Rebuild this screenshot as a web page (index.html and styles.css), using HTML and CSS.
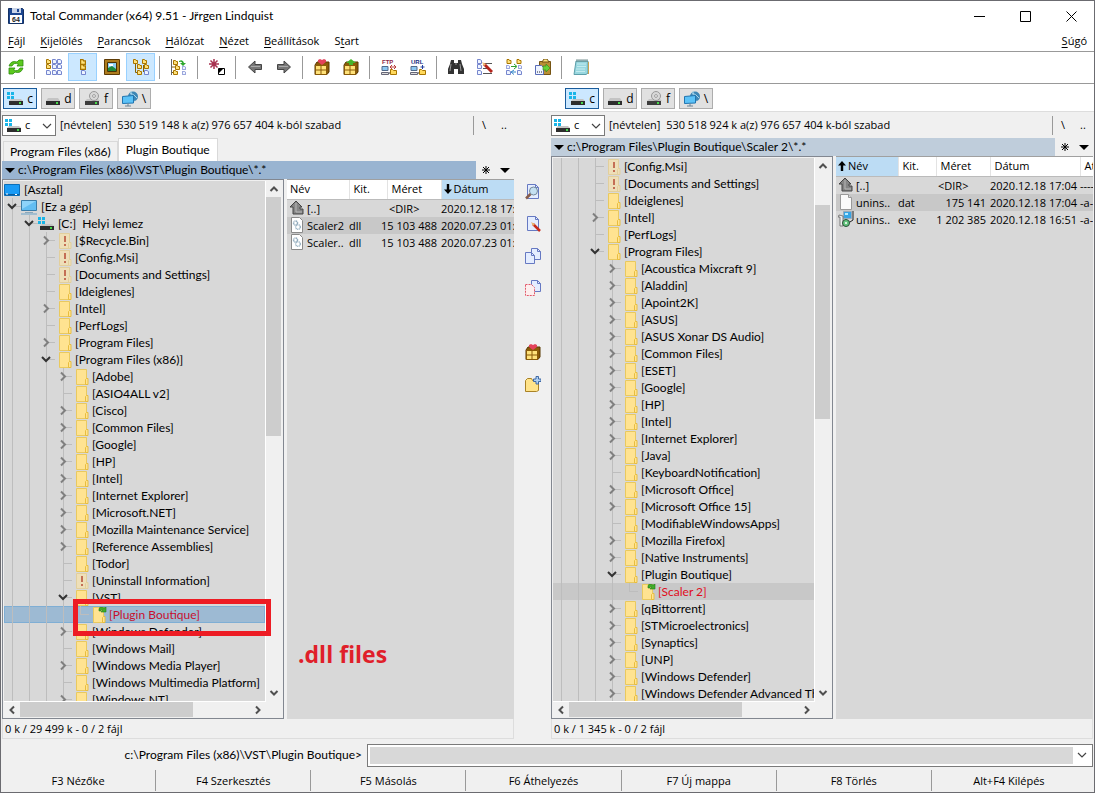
FILE: index.html
```html
<!DOCTYPE html>
<html lang="hu">
<head>
<meta charset="utf-8">
<title>Total Commander (x64) 9.51 - Jřrgen Lindquist</title>
<link rel="stylesheet" href="styles.css">
<script src="tree.js" defer></script>
</head>
<body>
<svg class="defs" aria-hidden="true">
  <symbol id="folder" viewBox="0 0 16 16"><path d="M2.5.5h10v15h-10z" fill="#ffe391" stroke="#e9c95f"/><path d="M12.500 9.500h1.500v6h-2.500v-5z" fill="#ffe391" stroke="#e8bd3f"/></symbol>
  <symbol id="hidden" viewBox="0 0 16 16"><path d="M2.500.5h10v15h-10z" fill="#eedfb8" stroke="#e2cf9c"/><path d="M12.500 9.500h1.500v6h-2.500v-5z" fill="#eedfb8" stroke="#e2cf9c"/><path d="M7 3h2v6H7zM7 11h2v2H7z" fill="#c46f55"/></symbol>
  <symbol id="current" viewBox="0 0 16 16"><path d="M2.500.5h10v15h-10z" fill="#ffe391" stroke="#e9c95f"/><path d="M12.500 9.500h1.500v6h-2.500v-5z" fill="#ffe391" stroke="#e8bd3f"/><path d="M8 4V2q0-2 3-2l2 1 2-1v5h-5l2-2q-2-1-2 1z" fill="#3fae2a" stroke="#237a18" stroke-width=".6"/></symbol>
  <symbol id="desktop" viewBox="0 0 16 16"><path d="M.5 2.500h15v11H.5z" fill="#1a9bf5" stroke="#0c6fb8"/><path d="M1 12h14v1H1z" fill="#0b5d9e"/><path d="M2 12h2M11 12.500h2" stroke="#fff"/></symbol>
  <symbol id="pc" viewBox="0 0 16 16"><path d="M.5 1.500h15v10H.5z" fill="#62bdf2" stroke="#3a7ca8"/><path d="M1 2h14L1 10z" fill="#8dd3fa"/><path d="M4 13.500h8" stroke="#8aa7ba"/><path d="M0 15h16" stroke="#6da3c7"/></symbol>
  <symbol id="hdd" viewBox="0 0 16 16"><path d="M4 7h10l2 3H2z" fill="#c4c4c4"/><path d="M2 10h14v4H2z" fill="#2d2d2d"/><path d="M12 11h2v2h-2z" fill="#46d84a"/></symbol>
  <symbol id="sysdrive" viewBox="0 0 16 16"><path d="M0 1h3v3H0zM4 1h3v3H4zM0 5h3v3H0zM4 5h3v3H4z" fill="#19b5e8"/><path d="M4 8h10l2 2H2z" fill="#c4c4c4"/><path d="M2 10h14v4H2z" fill="#2d2d2d"/><path d="M12 11h2v2h-2z" fill="#46d84a"/></symbol>
  <symbol id="cd" viewBox="0 0 16 16"><path d="M3 8h11l2 2H1z" fill="#c4c4c4"/><circle cx="10" cy="5" r="4.500" fill="#d8d8d8" stroke="#999"/><circle cx="10" cy="5" r="1.400" fill="#fff" stroke="#999"/><path d="M1 10h14v4H1z" fill="#3d3d3d"/><path d="M11 11h2v2h-2z" fill="#46d84a"/></symbol>
  <symbol id="net" viewBox="0 0 16 16"><circle cx="11" cy="5.500" r="5" fill="#3d86b5"/><path d="M8 2q4 1 7 5M9 0q-1 5 3 10" stroke="#a9d5ea" fill="none"/><path d="M.5 5.500l11-1v7.500l-11 .5z" fill="#5cc2f7" stroke="#2075b0"/><path d="M3 15h6M6 12v3" stroke="#6b8496"/></symbol>
  <symbol id="up" viewBox="0 0 16 16"><path d="M7 1l6 6h-2v2h3v5H4V7H1z" fill="#858585" stroke="#444"/><path d="M7 3v9h6" stroke="#b8b8b8" fill="none"/></symbol>
  <symbol id="dll" viewBox="0 0 16 16"><path d="M2.500.5h8l3 3v12h-11z" fill="#fff" stroke="#8a8a8a"/><circle cx="6.500" cy="6" r="2" fill="none" stroke="#8fa9bb" stroke-width="1.500" stroke-dasharray="1 .5"/><circle cx="9" cy="10" r="2.300" fill="none" stroke="#9bb4c4" stroke-width="1.500" stroke-dasharray="1 .5"/></symbol>
  <symbol id="file" viewBox="0 0 16 16"><path d="M2.500.5h8l3 3v12h-11z" fill="#fafafa" stroke="#999"/><path d="M10.500.5v3h3" fill="#ddd" stroke="#999"/></symbol>
  <symbol id="setup" viewBox="0 0 16 16"><path d="M5.500.5h8v7h-8z" fill="#37a5e5" stroke="#9ab"/><path d="M7 2h3v2H7z" fill="#b9edff"/><path d="M1 4l4 1v10H2V6H0z" fill="#eee" stroke="#555" stroke-width=".7"/><path d="M15 0v9l-3 2H8" stroke="#222" fill="none"/><circle cx="8" cy="12" r="3.500" fill="#62c47d" stroke="#2d4d39"/><circle cx="8" cy="12" r="1" fill="#fff"/></symbol>
  <symbol id="down" viewBox="0 0 17 17"><path d="M4 6l4 4 4-4" fill="none" stroke="#333" stroke-width="2"/></symbol>
  <symbol id="right" viewBox="0 0 17 17"><path d="M6 4.500l4 4-4 4" fill="none" stroke="#808080" stroke-width="2"/></symbol>
  <symbol id="thin" viewBox="0 0 10 10"><path d="M1 3l4 4 4-4" fill="none" stroke="#444" stroke-width="1.200"/></symbol>
  <symbol id="sup" viewBox="0 0 10 10"><path d="M1.500 7L5 3.500 8.500 7" fill="none" stroke="#505050" stroke-width="2"/></symbol>
  <symbol id="sdown" viewBox="0 0 10 10"><path d="M1.500 3L5 6.500 8.500 3" fill="none" stroke="#505050" stroke-width="2"/></symbol>
  <symbol id="sleft" viewBox="0 0 10 10"><path d="M7 1.500L3.500 5 7 8.500" fill="none" stroke="#505050" stroke-width="2"/></symbol>
  <symbol id="sright" viewBox="0 0 10 10"><path d="M3 1.500L6.500 5 3 8.500" fill="none" stroke="#505050" stroke-width="2"/></symbol>
  <symbol id="tri" viewBox="0 0 10 10"><path d="M0 3h10L5 8z" fill="#000"/></symbol>
  <symbol id="star" viewBox="0 0 10 10"><path d="M5 1v8M1 5h8M2 2l6 6M8 2L2 8" stroke="#000"/></symbol>
  <symbol id="arrup" viewBox="0 0 8 10"><path d="M4 0l4 4.500H5.200V10H2.800V4.500H0z"/></symbol>
  <symbol id="arrdown" viewBox="0 0 8 10"><path d="M4 10l4-4.500H5.200V0H2.800v5.500H0z"/></symbol>
  <symbol id="app" viewBox="0 0 16 16"><path d="M.5.5h14l1 1v14H.5z" fill="#1c4690" stroke="#143164"/><path d="M4 0h9v5H4z" fill="#c9d4e8"/><path d="M9 1h2v3H9z" fill="#1c4690"/><path d="M2 7h12v8H2z" fill="#fff"/><text x="4" y="14" font-size="7" font-weight="bold" font-family="Liberation Sans" fill="#222">64</text></symbol>
  <symbol id="refresh" viewBox="0 0 16 16"><path d="M1 7q2-6 8-4l2-2h4v6H9l1.500-2Q6 3 4 7z" fill="#5cc91f" stroke="#2c8c0c" stroke-width=".8"/><path d="M15 9q-2 6-8 4l-2 2H1V9h6l-1.500 2q4.500 2 6.500-2z" fill="#5cc91f" stroke="#2c8c0c" stroke-width=".8"/></symbol>
  <symbol id="minifolder" viewBox="0 0 5 5"><path d="M.5.5h2l.5 1h1.500v3h-4z" fill="#ffe27a" stroke="#a87500"/></symbol>
  <symbol id="minifile" viewBox="0 0 5 5"><path d="M.5.500h2.500l1.500 1v3h-4z" fill="#eef4ff" stroke="#6878c8" stroke-width=".9"/></symbol>
  <symbol id="brief" viewBox="0 0 16 16"><use href="#minifolder" x="0" y="0" width="5" height="5"/><use href="#minifolder" x="0" y="5" width="5" height="5"/><use href="#minifile" x="0" y="11" width="5" height="5"/><use href="#minifile" x="6" y="0" width="5" height="5"/><use href="#minifile" x="6" y="5" width="5" height="5"/><use href="#minifile" x="6" y="11" width="5" height="5"/><use href="#minifile" x="11" y="0" width="5" height="5"/><use href="#minifile" x="11" y="5" width="5" height="5"/><use href="#minifile" x="11" y="11" width="5" height="5"/></symbol>
  <symbol id="full" viewBox="0 0 16 16"><use href="#minifolder" x="5" y="0" width="6" height="6"/><use href="#minifolder" x="5" y="5" width="6" height="6"/><use href="#minifile" x="6" y="11" width="5" height="5"/></symbol>
  <symbol id="thumbs" viewBox="0 0 16 16"><path d="M.5.5h15v15H.5z" fill="#ad7c1d" stroke="#5d3b06"/><path d="M3.500 3.500h9v9h-9z" fill="#8ed0f4" stroke="#4a3205"/><path d="M4 9l4-2 4 3v2H4z" fill="#1d8a3c"/><path d="M5 5h4v2H5z" fill="#fff"/></symbol>
  <symbol id="tree" viewBox="0 0 16 16"><path d="M2.500 5v8.500H6M10.500 6v7" stroke="#876400" fill="none"/><use href="#minifolder" x="0" y="0" width="5" height="5"/><use href="#minifolder" x="4" y="5" width="5" height="5"/><use href="#minifolder" x="4" y="11" width="5" height="5"/><use href="#minifolder" x="9" y="0" width="5" height="5"/><use href="#minifolder" x="11" y="5" width="5" height="5"/><use href="#minifile" x="11" y="11" width="5" height="5"/></symbol>
  <symbol id="branch" viewBox="0 0 16 16"><path d="M.5 0v16" stroke="#666"/><path d="M1 13.500h3M1 8h4" stroke="#876400"/><use href="#minifolder" x="2" y="1" width="5" height="5"/><use href="#minifolder" x="4" y="6" width="5" height="5"/><use href="#minifolder" x="2" y="11" width="5" height="5"/><path d="M8 2q4-2 5 2h2l-3 3-3-3h2q0-2-3-1z" fill="#2fa82f"/><use href="#minifile" x="11" y="7" width="4" height="4"/><use href="#minifile" x="11" y="12" width="4" height="4"/></symbol>
  <symbol id="select" viewBox="0 0 16 16"><path d="M5 0v10M0 5h10M1.500 1.500l7 7M8.500 1.500l-7 7" stroke="#a83250" stroke-width="1.500"/><path d="M9.500 9.500h6v6h-6z" fill="#fff" stroke="#000"/><path d="M10 10h4l-4 4z"/></symbol>
  <symbol id="back" viewBox="0 0 16 16"><path d="M1.500 8l6.500-6v3.500h6.500v5H8V14z" fill="#777" stroke="#444"/><path d="M4 7.500h9" stroke="#aaa"/></symbol>
  <symbol id="forward" viewBox="0 0 16 16"><path d="M14.500 8L8 2v3.500H1.500v5H8V14z" fill="#777" stroke="#444"/><path d="M3 7.500h9" stroke="#aaa"/></symbol>
  <symbol id="crate" viewBox="0 0 16 16"><path d="M1 6l2-3h12v10l-2 2.500H1z" fill="#8a5b08" stroke="#593800"/><path d="M1.500 6.500h11v9h-11z" fill="#ffe27a" stroke="#8a5b08"/><path d="M7 6v9M1 11h12" stroke="#8a5b08"/></symbol>
  <symbol id="pack" viewBox="0 0 16 16"><use href="#crate"/><path d="M4 1l2-1 2 1 2-1 2 1v2L8 6 4 3z" fill="#e4425b"/></symbol>
  <symbol id="unpack" viewBox="0 0 16 16"><use href="#crate"/><path d="M8 0l5 4h-3v2H6V4H3z" fill="#45b52c"/></symbol>
  <symbol id="machines" viewBox="0 0 16 16"><path d="M1 7.500h6v4H1z" fill="#8cc7f0" stroke="#50698a"/><path d="M.5 13.500h7v2h-7z" fill="#ddd" stroke="#667"/><path d="M8 14h3" stroke="#333"/><path d="M9.500 10.500h2l1 1h3v4h-6z" fill="#ffd95c" stroke="#a87500"/></symbol>
  <symbol id="ftp" viewBox="0 0 16 16"><text x="1" y="5" font-size="6" font-weight="bold" font-family="Liberation Sans" fill="#8c2746">FTP</text><use href="#machines"/><path d="M9 8h6M11 6L9 8l2 2M13 6l2 2-2 2" stroke="#b83c3c" fill="none"/></symbol>
  <symbol id="url" viewBox="0 0 16 16"><text x="1" y="5" font-size="6" font-weight="bold" font-family="Liberation Sans" fill="#202c80">URL</text><use href="#machines"/><path d="M12.500 6v4M10.500 8h4" stroke="#233f9e" fill="none"/></symbol>
  <symbol id="find" viewBox="0 0 16 16"><path d="M3 1h3v3h4V1h3l1 4 2 5v5h-6v-5H6v5H0v-5l2-5z" fill="#333"/><path d="M3 5L2 12M12 5l1 7M7 5h2" stroke="#999"/></symbol>
  <symbol id="rename" viewBox="0 0 16 16"><use href="#minifile" x="0" y="0" width="5" height="5"/><use href="#minifile" x="0" y="5" width="5" height="5"/><use href="#minifile" x="0" y="11" width="5" height="5"/><path d="M6 4.500h9M6 9.500h6M6 14.500h9" stroke="#555"/><path d="M7 5l8 8" stroke="#b5241c" stroke-width="3"/><path d="M5 3l4 2-2 2z" fill="#f2c27a"/></symbol>
  <symbol id="sync" viewBox="0 0 16 16"><use href="#minifolder" x="0" y="0" width="6" height="5"/><use href="#minifolder" x="10" y="0" width="6" height="5"/><use href="#minifile" x="0" y="6" width="4" height="4"/><use href="#minifile" x="0" y="11" width="5" height="5"/><use href="#minifile" x="12" y="6" width="4" height="4"/><use href="#minifile" x="11" y="11" width="5" height="5"/><path d="M5 7.500h5M8 5l3 2.500L8 10" stroke="#2da02d" fill="none"/><path d="M10 13H6M8 11l-3 2 3 2.500" stroke="#3285c8" fill="none"/></symbol>
  <symbol id="paste" viewBox="0 0 16 16"><path d="M4.500 2.500h11v13h-11z" fill="#b98f35" stroke="#755312"/><path d="M7 3l2-3h3l2 3z" fill="#ffe57d" stroke="#755312"/><path d="M.5 6.500h6l2 2v7h-8z" fill="#eef4ff" stroke="#5a6db8"/><path d="M2 13h1M4 13h1M6 13h1" stroke="#223"/><path d="M8 7h3V5l4 4-4 4v-2H8z" fill="#66d338" stroke="#35851a" stroke-width=".6"/></symbol>
  <symbol id="notes" viewBox="0 0 16 16"><path d="M3 2h12v12l-2 1.500H1z" fill="#98d7df" stroke="#5e9faa"/><path d="M4 5h9M4 7.500h9M3 10h9M3 12.500h9" stroke="#d5f3f6" stroke-width=".7"/><path d="M4 0v3M6 0v3M8 0v3M10 0v3M12 0v3M14 0v3" stroke="#577" stroke-width=".8"/><path d="M15.500 3v12" stroke="#c9a14f"/></symbol>
  <symbol id="page" viewBox="0 0 16 16"><path d="M2.500.5h8l3 3v11h-11z" fill="#e4edff" stroke="#6679c2"/><path d="M10.500.5v3h3" fill="none" stroke="#6679c2"/></symbol>
  <symbol id="view" viewBox="0 0 16 16"><use href="#page"/><circle cx="8.500" cy="7" r="4" fill="#c4e0f2" stroke="#74899b"/><path d="M5.500 10L1 14.500" stroke="#875c4b" stroke-width="2.500"/></symbol>
  <symbol id="edit" viewBox="0 0 16 16"><use href="#page"/><path d="M8 8l7 7" stroke="#c62a1c" stroke-width="2.500"/><path d="M6 6l4 2-2 2z" fill="#e9b66f"/></symbol>
  <symbol id="copy" viewBox="0 0 16 16"><path d="M6.500.5h6l3 3v8h-9z" fill="#e4edff" stroke="#6679c2"/><path d="M12.500.5v3h3" stroke="#6679c2" fill="none"/><path d="M.5 4.500h6l3 3v8h-9z" fill="#e4edff" stroke="#6679c2"/><path d="M6.500 4.500v3h3" stroke="#6679c2" fill="none"/></symbol>
  <symbol id="move" viewBox="0 0 16 16"><path d="M6.500.5h6l3 3v8h-9z" fill="#e4edff" stroke="#6679c2"/><path d="M12.500.5v3h3" stroke="#6679c2" fill="none"/><path d="M.5 4.500h6l3 3v8h-9z" fill="#fdeeee" stroke="#e2596a" stroke-dasharray="2 1"/></symbol>
  <symbol id="mkdir" viewBox="0 0 16 16"><path d="M.5 4.500l2-2h4l1 2h5l1 1v9l-2 1H.5z" fill="#ffe389" stroke="#a98226"/><path d="M11 .5h2.500V3H16v2.500h-2.500V8H11V5.500H8.500V3H11z" fill="#afd0f2" stroke="#315d9e" stroke-width=".9"/></symbol>
</svg>

<header class="titlebar">
  <svg class="ic"><use href="#app"/></svg>
  <h1>Total Commander (x64) 9.51 - Jřrgen Lindquist</h1>
  <div class="winbtns">
    <button aria-label="Kis méret"><svg class="win" viewBox="0 0 11 11"><path d="M0 5.500h11" stroke="#000"/></svg></button>
    <button aria-label="Teljes méret"><svg class="win" viewBox="0 0 11 11"><path d="M.5.5h10v10H.5z" fill="none" stroke="#000"/></svg></button>
    <button aria-label="Bezárás"><svg class="win" viewBox="0 0 11 11"><path d="M.5.5l10 10M10.500.5l-10 10" stroke="#000"/></svg></button>
  </div>
</header>

<nav class="menu">
  <button><u>F</u>ájl</button><button><u>K</u>ijelölés</button><button><u>P</u>arancsok</button><button><u>H</u>álózat</button><button><u>N</u>ézet</button><button><u>B</u>eállítások</button><button>S<u>t</u>art</button><button class="help"><u>S</u>úgó</button>
</nav>

<div class="toolbar" role="toolbar">
  <button aria-label="Frissítés"><svg class="ic"><use href="#refresh"/></svg></button><i class="sep"></i>
  <button aria-label="Rövid"><svg class="ic"><use href="#brief"/></svg></button>
  <button class="on" aria-label="Teljes"><svg class="ic"><use href="#full"/></svg></button>
  <button aria-label="Képek"><svg class="ic"><use href="#thumbs"/></svg></button>
  <button class="on" aria-label="Fa"><svg class="ic"><use href="#tree"/></svg></button><i class="sep"></i>
  <button aria-label="Ágnézet"><svg class="ic"><use href="#branch"/></svg></button><i class="sep"></i>
  <button aria-label="Kijelölés megfordítása"><svg class="ic"><use href="#select"/></svg></button><i class="sep"></i>
  <button aria-label="Vissza"><svg class="ic"><use href="#back"/></svg></button>
  <button aria-label="Előre"><svg class="ic"><use href="#forward"/></svg></button><i class="sep"></i>
  <button aria-label="Tömörítés"><svg class="ic"><use href="#pack"/></svg></button>
  <button aria-label="Kibontás"><svg class="ic"><use href="#unpack"/></svg></button><i class="sep"></i>
  <button aria-label="Kapcsolódás"><svg class="ic"><use href="#ftp"/></svg></button>
  <button aria-label="Új kapcsolat"><svg class="ic"><use href="#url"/></svg></button><i class="sep"></i>
  <button aria-label="Keresés"><svg class="ic"><use href="#find"/></svg></button>
  <button aria-label="Csoportos átnevezés"><svg class="ic"><use href="#rename"/></svg></button>
  <button aria-label="Szinkronizálás"><svg class="ic"><use href="#sync"/></svg></button>
  <button aria-label="Beillesztés"><svg class="ic"><use href="#paste"/></svg></button><i class="sep"></i>
  <button aria-label="Jegyzettömb"><svg class="ic"><use href="#notes"/></svg></button>
</div>

<div class="drivebar">
  <div class="drives">
    <button class="on"><svg class="ic"><use href="#sysdrive"/></svg>c</button><button><svg class="ic"><use href="#hdd"/></svg>d</button><button><svg class="ic"><use href="#cd"/></svg>f</button><button><svg class="ic"><use href="#net"/></svg>\</button>
  </div>
  <div class="drives">
    <button class="on"><svg class="ic"><use href="#sysdrive"/></svg>c</button><button><svg class="ic"><use href="#hdd"/></svg>d</button><button><svg class="ic"><use href="#cd"/></svg>f</button><button><svg class="ic"><use href="#net"/></svg>\</button>
  </div>
</div>

<main class="panes">
  <section class="pane">
    <div class="driverow">
      <div class="drivesel"><select aria-label="Meghajtó"><option>c</option></select><svg class="ic"><use href="#sysdrive"/></svg><svg class="chev"><use href="#thin"/></svg></div>
      <span class="space">[névtelen]&nbsp; 530 519 148 k a(z) 976 657 404 k-ból szabad</span>
      <div class="jump"><button>\</button><button>..</button></div>
    </div>
    <div class="tabs"><button>Program Files (x86)</button><button class="on">Plugin Boutique</button></div>
    <div class="pathrow">
      <div class="path active"><svg class="mini"><use href="#tri"/></svg>c:\Program Files (x86)\VST\Plugin Boutique\*.*</div>
      <button aria-label="Kedvencek"><svg class="mini"><use href="#star"/></svg></button><button aria-label="Előzmények"><svg class="mini"><use href="#tri"/></svg></button>
    </div>
    <div class="body">
      <div class="treebox">
        <ul class="tree" id="tree-left"></ul>
        <div class="vbar"><button aria-label="Fel"><svg class="mini"><use href="#sup"/></svg></button><div class="track"><i class="thumb t-left"></i></div><button aria-label="Le"><svg class="mini"><use href="#sdown"/></svg></button></div>
        <div class="hbar"><button aria-label="Balra"><svg class="mini"><use href="#sleft"/></svg></button><div class="track"><i class="thumb t-across"></i></div><button aria-label="Jobbra"><svg class="mini"><use href="#sright"/></svg></button></div>
      </div>
      <div class="list">
        <table class="four">
          <colgroup><col class="c-name"><col class="c-ext"><col class="c-size"><col class="c-date"></colgroup>
          <thead><tr><th>Név</th><th>Kit.</th><th>Méret</th><th class="sorted"><svg class="arr"><use href="#arrdown"/></svg>Dátum</th></tr></thead>
          <tbody>
            <tr><td><span class="name"><svg class="ic"><use href="#up"/></svg>[..]</span></td><td></td><td class="dir">&lt;DIR&gt;</td><td>2020.12.18 17:04</td></tr>
            <tr class="cur"><td><span class="name"><svg class="ic"><use href="#dll"/></svg>Scaler2</span></td><td>dll</td><td><span class="num">15 103 488</span></td><td>2020.07.23 01:12</td></tr>
            <tr><td><span class="name"><svg class="ic"><use href="#dll"/></svg>Scaler..</span></td><td>dll</td><td><span class="num">15 103 488</span></td><td>2020.07.23 01:12</td></tr>
          </tbody>
        </table>
      </div>
      <div class="mark"></div>
      <div class="note">.dll files</div>
    </div>
    <div class="status">0 k / 29 499 k - 0 / 2 fájl</div>
  </section>

  <div class="middle">
    <button aria-label="Nézőke"><svg class="ic"><use href="#view"/></svg></button>
    <button aria-label="Szerkesztés"><svg class="ic"><use href="#edit"/></svg></button>
    <button aria-label="Másolás"><svg class="ic"><use href="#copy"/></svg></button>
    <button aria-label="Áthelyezés"><svg class="ic"><use href="#move"/></svg></button>
    <button class="apart" aria-label="Tömörítés"><svg class="ic"><use href="#pack"/></svg></button>
    <button aria-label="Új mappa"><svg class="ic"><use href="#mkdir"/></svg></button>
  </div>

  <section class="pane">
    <div class="driverow">
      <div class="drivesel"><select aria-label="Meghajtó"><option>c</option></select><svg class="ic"><use href="#sysdrive"/></svg><svg class="chev"><use href="#thin"/></svg></div>
      <span class="space">[névtelen]&nbsp; 530 518 924 k a(z) 976 657 404 k-ból szabad</span>
      <div class="jump"><button>\</button><button>..</button></div>
    </div>
    <div class="pathrow">
      <div class="path"><svg class="mini"><use href="#tri"/></svg>c:\Program Files\Plugin Boutique\Scaler 2\*.*</div>
      <button aria-label="Kedvencek"><svg class="mini"><use href="#star"/></svg></button><button aria-label="Előzmények"><svg class="mini"><use href="#tri"/></svg></button>
    </div>
    <div class="body">
      <div class="treebox">
        <ul class="tree" id="tree-right"></ul>
        <div class="vbar"><button aria-label="Fel"><svg class="mini"><use href="#sup"/></svg></button><div class="track"><i class="thumb t-right"></i></div><button aria-label="Le"><svg class="mini"><use href="#sdown"/></svg></button></div>
        <div class="hbar"><button aria-label="Balra"><svg class="mini"><use href="#sleft"/></svg></button><div class="track"><i class="thumb t-across"></i></div><button aria-label="Jobbra"><svg class="mini"><use href="#sright"/></svg></button></div>
      </div>
      <div class="list">
        <table>
          <colgroup><col class="c-name"><col class="c-ext"><col class="c-size"><col class="c-date"><col class="c-attr"></colgroup>
          <thead><tr><th class="sorted"><svg class="arr"><use href="#arrup"/></svg>Név</th><th>Kit.</th><th>Méret</th><th>Dátum</th><th>Attrib.</th></tr></thead>
          <tbody>
            <tr><td><span class="name"><svg class="ic"><use href="#up"/></svg>[..]</span></td><td></td><td class="dir">&lt;DIR&gt;</td><td>2020.12.18 17:04</td><td>----</td></tr>
            <tr class="cur"><td><span class="name"><svg class="ic"><use href="#file"/></svg>unins..</span></td><td>dat</td><td><span class="num">175 141</span></td><td>2020.12.18 17:04</td><td>-a--</td></tr>
            <tr><td><span class="name"><svg class="ic"><use href="#setup"/></svg>unins..</span></td><td>exe</td><td><span class="num">1 202 385</span></td><td>2020.12.18 16:51</td><td>-a--</td></tr>
          </tbody>
        </table>
      </div>
    </div>
    <div class="status">0 k / 1 345 k - 0 / 2 fájl</div>
  </section>
</main>

<div class="cmdline">
  <label for="cmd">c:\Program Files (x86)\VST\Plugin Boutique&gt;</label>
  <div class="cmdbox"><input id="cmd" type="text"><button aria-label="Előzmények"><svg class="mini"><use href="#thin"/></svg></button></div>
</div>
<footer class="fkeys">
  <button>F3 Nézőke</button><button>F4 Szerkesztés</button><button>F5 Másolás</button><button>F6 Áthelyezés</button><button>F7 Új mappa</button><button>F8 Törlés</button><button>Alt+F4 Kilépés</button>
</footer>
</body>
</html>
```
FILE: tree.js
```javascript
// Each entry: depth, toggle ("+" closed, "-" open, "." none), label, icon (default folder)
const LEFT = [
  [0, ".", "[Asztal]", "desktop"], [1, "-", "[Ez a gép]", "pc"], [2, "-", "[C:]\u00a0 Helyi lemez", "sysdrive"],
  [3, "+", "[$Recycle.Bin]", "hidden"], [3, ".", "[Config.Msi]", "hidden"], [3, ".", "[Documents and Settings]", "hidden"],
  [3, ".", "[Ideiglenes]"], [3, "+", "[Intel]"], [3, ".", "[PerfLogs]"], [3, "+", "[Program Files]"],
  [3, "-", "[Program Files (x86)]"], [4, "+", "[Adobe]"], [4, ".", "[ASIO4ALL v2]"], [4, "+", "[Cisco]"],
  [4, "+", "[Common Files]"], [4, "+", "[Google]"], [4, "+", "[HP]"], [4, "+", "[Intel]"],
  [4, "+", "[Internet Explorer]"], [4, "+", "[Microsoft.NET]"], [4, "+", "[Mozilla Maintenance Service]"],
  [4, "+", "[Reference Assemblies]"], [4, ".", "[Todor]"], [4, ".", "[Uninstall Information]", "hidden"],
  [4, "-", "[VST]"], [5, ".", "[Plugin Boutique]", "current", "picked"], [4, "+", "[Windows Defender]"],
  [4, ".", "[Windows Mail]"], [4, "+", "[Windows Media Player]"], [4, ".", "[Windows Multimedia Platform]"],
  [4, "+", "[Windows NT]"]
];
const RIGHT = [
  [3, ".", "[Config.Msi]", "hidden"], [3, ".", "[Documents and Settings]", "hidden"], [3, ".", "[Ideiglenes]"],
  [3, "+", "[Intel]"], [3, ".", "[PerfLogs]"], [3, "-", "[Program Files]"], [4, "+", "[Acoustica Mixcraft 9]"],
  [4, "+", "[Aladdin]"], [4, "+", "[Apoint2K]"], [4, "+", "[ASUS]"], [4, "+", "[ASUS Xonar DS Audio]"],
  [4, "+", "[Common Files]"], [4, "+", "[ESET]"], [4, "+", "[Google]"], [4, "+", "[HP]"], [4, "+", "[Intel]"],
  [4, "+", "[Internet Explorer]"], [4, "+", "[Java]"], [4, ".", "[KeyboardNotification]"],
  [4, "+", "[Microsoft Office]"], [4, "+", "[Microsoft Office 15]"], [4, ".", "[ModifiableWindowsApps]"],
  [4, "+", "[Mozilla Firefox]"], [4, "+", "[Native Instruments]"], [4, "-", "[Plugin Boutique]"],
  [5, ".", "[Scaler 2]", "current", "dimpicked"], [4, "+", "[qBittorrent]"], [4, "+", "[STMicroelectronics]"],
  [4, "+", "[Synaptics]"], [4, "+", "[UNP]"], [4, "+", "[Windows Defender]"],
  [4, "+", "[Windows Defender Advanced Threat Protection]"]
];
const use = (id, cls) => `<svg class="${cls}"><use href="#${id}"/></svg>`;
function row([depth, toggle, label, icon = "folder", state = ""]) {
  let cells = "";
  for (let i = 1; i < depth; i++) cells += '<i class="guide"></i>';
  if (depth) {
    cells += toggle === "."
      ? `<i class="guide tick${depth === 5 ? " last" : ""}"></i>`
      : `<button class="guide tick" aria-label="${label}">${use(toggle === "+" ? "right" : "down", "tog")}</button>`;
  }
  return `<li class="${state}${depth > 2 ? " deep" : ""}">${cells}${use(icon, "ic")}<span>${label}</span></li>`;
}
document.getElementById("tree-left").innerHTML = LEFT.map(row).join("");
document.getElementById("tree-right").innerHTML = RIGHT.map(row).join("");
```
FILE: styles.css
```css
* { box-sizing: border-box; }
html, body { height: 100%; }
body {
  margin: 0; display: flex; flex-direction: column; overflow: hidden;
  border: 1px solid #6b6b70; background: #f0f0f0; color: #000;
  font: 11px/16px "Open Sans", "Noto Sans", sans-serif; white-space: nowrap;
}
button, input, select { font: inherit; color: inherit; margin: 0; padding: 0; border: 0; border-radius: 0; background: none; }
button { display: flex; align-items: center; justify-content: center; }
ul { list-style: none; margin: 0; padding: 0; }
.defs { position: absolute; width: 0; height: 0; }
.ic { width: 16px; height: 16px; flex: none; }
.mini { width: 10px; height: 10px; flex: none; }

.titlebar { display: flex; align-items: center; height: 30px; padding-left: 7px; gap: 6px; background: #fff; flex: none; }
.titlebar h1 { margin: 0; font: inherit; flex: 1; }
.winbtns { display: flex; }
.winbtns button { width: 46px; height: 29px; }
.win { width: 11px; height: 11px; }

.menu { display: flex; gap: 15px; padding: 0 7px; height: 21px; flex: none; background: #fff; border-bottom: 1px solid #999; align-items: center; }
.menu .help { margin-left: auto; }
.menu u { text-underline-offset: 2px; }

.toolbar { display: flex; height: 32px; padding: 1px 0; background: #fff; border-bottom: 1px solid #999; flex: none; }
.toolbar button { width: 29px; height: 28px; }
.toolbar .on { background: #cce8ff; border: 1px solid #99d1ff; }
.sep { width: 1px; margin: 3px 4px; background: #999; }

.drivebar { display: grid; grid-template-columns: 549fr 544fr; height: 28px; background: #fff; border-bottom: 1px solid #ddd; flex: none; }
.drives { display: flex; gap: 4px; padding: 4px 2px; align-items: start; }
.drives + .drives { padding-left: 15px; }
.drives button { width: 34px; height: 21px; gap: 4px; background: #e1e1e1; border: 1px solid #adadad; font-size: 12px; }
.drives .on { background: #cce8ff; border-color: #1a5c9c; }

.panes { flex: 1; min-height: 0; display: grid; grid-template-columns: 512fr 37px 542fr; padding: 0 1px 0 1px; }
.pane { display: flex; flex-direction: column; min-width: 0; min-height: 0; }
.driverow { display: flex; align-items: center; height: 26px; flex: none; }
.drivesel { position: relative; width: 54px; height: 21px; background: #fff; border: 1px solid #7a7a7a; }
.drivesel select { appearance: none; width: 100%; height: 100%; padding-left: 22px; }
.drivesel .ic { position: absolute; left: 2px; top: 2px; pointer-events: none; }
.drivesel .chev { position: absolute; right: 3px; top: 5px; width: 10px; height: 10px; pointer-events: none; }
.space { margin-left: 4px; flex: 1; }
.jump { display: flex; border-left: 1px solid #999; height: 19px; }
.jump button { width: 20px; }

.tabs, .path, .tree, .cmdline, .titlebar { font-family: Lato, "Open Sans", sans-serif; font-size: 12px; }
.tabs { display: flex; align-items: flex-end; height: 23px; padding-left: 1px; flex: none; }
.tabs button { height: 20px; padding: 0 6px; border: 1px solid #d9d9d9; border-bottom: 0; }
.tabs .on { height: 23px; padding: 0 7px; background: #fff; }
.pathrow { display: flex; height: 18px; flex: none; }
.path { flex: 1; display: flex; align-items: center; gap: 3px; padding-left: 3px; background: #bfcddb; }
.path.active { background: #99b4d1; }
.pathrow button { width: 19px; }

.body { position: relative; flex: 1; min-height: 0; display: flex; gap: 3px; }
.treebox { flex: 0 0 282px; display: grid; grid-template: minmax(0, 1fr) 17px / minmax(0, 1fr) 17px; border: 1px solid #828790; padding: 1px 0 0 1px; }
.tree { overflow: hidden; background: #d8d8d8; border-right: 1px solid #fff; }
.tree li { display: flex; align-items: center; height: 17px; }
.tree li span { margin-left: 4px; }
.tree .deep .ic { margin-left: 2px; }
.tree .deep span { margin-left: 2px; }
.picked { background: #9dbad3; box-shadow: inset 0 0 0 1px #7faed4; }
.dimpicked { background: #c8c8c8; }
.picked span { color: #c8102e; }
.dimpicked span { color: #e00b1c; }
.guide { flex: none; width: 17px; height: 17px; background: linear-gradient(#bdbdbd, #bdbdbd) 8px 0 / 1px 100% no-repeat; }
.tick { background: linear-gradient(#bdbdbd, #bdbdbd) 8px 0 / 1px 100% no-repeat, linear-gradient(#bdbdbd, #bdbdbd) 8px 8px / 9px 1px no-repeat; }
.tick.last { background: linear-gradient(#bdbdbd, #bdbdbd) 8px 0 / 1px 9px no-repeat, linear-gradient(#bdbdbd, #bdbdbd) 8px 8px / 9px 1px no-repeat; }
.tog { width: 17px; height: 17px; }
.vbar { display: flex; flex-direction: column; }
.hbar { display: flex; border-top: 1px solid #fff; }
.vbar button, .hbar button { width: 16px; height: 16px; flex: none; }
.track { flex: 1; position: relative; }
.thumb { position: absolute; background: #cdcdcd; }
.vbar .thumb { left: 0; right: 2px; }
.hbar .thumb { top: 0; bottom: 1px; }
.t-left { top: 0; height: 49%; }
.t-right { top: 6%; height: 42%; }
.t-across { left: 0; width: 75%; }

.list { flex: 1; min-width: 0; overflow: hidden; background: #d8d8d8; border-top: 1px solid #a0a0a0; }
table { table-layout: fixed; border-collapse: collapse; width: 288px; }
.four { width: 244px; }
.c-name { width: 62px; } .c-ext { width: 38px; } .c-size { width: 54px; } .c-date { width: 90px; } .c-attr { width: 44px; }
th { height: 19px; padding: 0 0 0 3px; font-weight: normal; text-align: left; background: #fff; border-right: 1px solid #e3e3e3; border-bottom: 1px solid #bbb; }
th + th { padding-left: 4px; }
th.sorted { background: #bcdcf4; padding-left: 2px; }
.arr { width: 8px; height: 10px; margin-right: 2px; vertical-align: -1px; }
td { height: 17px; padding: 0; line-height: 17px; }
.cur { background: #c8c8c8; }
.name { display: flex; align-items: center; gap: 2px; padding-left: 2px; }
.num { display: flex; justify-content: flex-end; padding-right: 4px; }
.dir { padding-left: 2px; }

.mark { position: absolute; left: 71px; top: 420px; width: 198px; height: 37px; border: 5px solid #ed1c24; }
.note { position: absolute; left: 296px; top: 457px; font-size: 23px; line-height: 36px; font-weight: bold; color: #e01f2a; }

.status { height: 20px; line-height: 20px; flex: none; padding: 0 2px; border: 1px solid #ddd; border-top: 0; }
.middle { display: flex; flex-direction: column; align-items: center; gap: 8px; padding-top: 68px; }
.middle button { width: 24px; height: 24px; }
.middle .apart { margin-top: 32px; }

.cmdline { display: flex; align-items: center; height: 30px; flex: none; margin-top: 1px; }
.cmdline label { flex: 0 0 366px; text-align: right; padding-right: 5px; }
.cmdbox { flex: 1; height: 23px; margin-right: 1px; display: flex; background: #fff; border: 1px solid #7a7a7a; padding: 2px; }
.cmdbox input { flex: 1; min-width: 0; background: #d8d8d8; }
.cmdbox button { width: 17px; }
.fkeys { display: flex; height: 21px; flex: none; margin-bottom: 1px; padding-right: 8px; }
.fkeys button { flex: 1; }
.fkeys button + button { border-left: 1px solid #999; }
```
